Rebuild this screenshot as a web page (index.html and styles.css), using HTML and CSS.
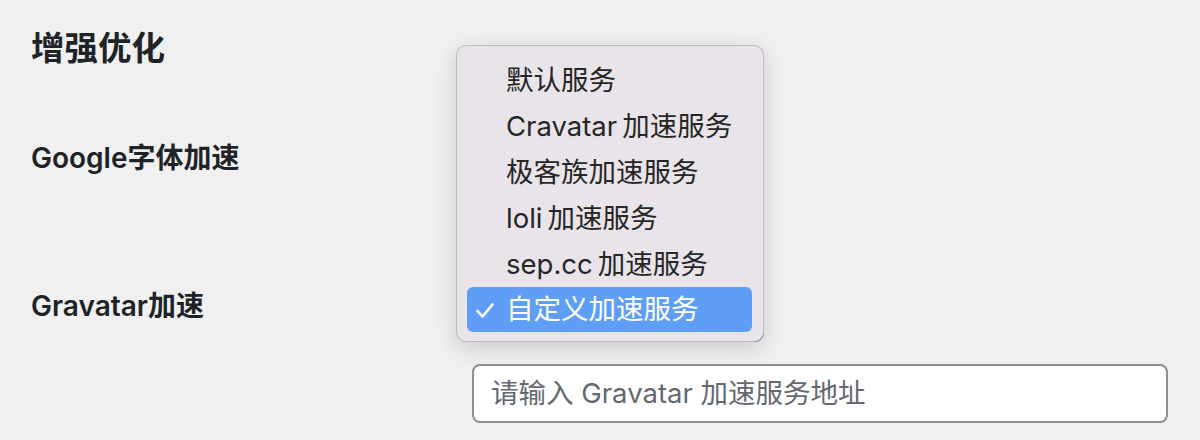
FILE: index.html
```html
<!DOCTYPE html>
<html lang="zh-CN">
<head>
<meta charset="utf-8">
<link rel="stylesheet" href="styles.css">
</head>
<body>
<div class="wrap">
  <h2 class="title">增强优化</h2>
  <div class="table">
    <div class="row row-one">
      <div class="th">Google字体加速</div>
      <div class="td"><div class="select"></div></div>
    </div>
    <div class="row row-two">
      <div class="th">Gravatar加速</div>
      <div class="td">
        <div class="select focus"></div>
        <div class="input">请输入 Gravatar 加速服务地址</div>
      </div>
    </div>
  </div>
  <div class="menu">
    <div class="item">默认服务</div>
    <div class="item">Cravatar&#8201;加速服务</div>
    <div class="item">极客族加速服务</div>
    <div class="item">loli&#8201;加速服务</div>
    <div class="item">sep.cc&#8201;加速服务</div>
    <div class="item selected">
      <svg class="check" width="18" height="15" viewBox="0 0 18 15"><path d="M1.5 8 L6.5 13.5 L16.5 1.5" fill="none" stroke="#fff" stroke-width="2.6" stroke-linecap="round" stroke-linejoin="round"/></svg>
      自定义加速服务
    </div>
  </div>
</div>
</body>
</html>
```

FILE: styles.css
```css
html, body {
  margin: 0;
  padding: 0;
  background: #f0f0f1;
}
body {
  font-family: "Inter", "Noto Sans CJK SC", sans-serif;
  color: #1d2327;
  width: 1200px;
  height: 440px;
  overflow: hidden;
}
.wrap {
  position: relative;
  padding: 26px 0 0 31px;
}
.title {
  margin: 0;
  font-size: 33.5px;
  line-height: 44px;
  font-weight: 700;
}
.table {
  margin-top: 40px;
}
.row {
  display: grid;
  grid-template-columns: 441px 696px;
}
.th {
  font-size: 28px;
  line-height: 36px;
  font-weight: 600;
}
.row-one { height: 140px; }
.row-one .th { padding-top: 30px; }
.row-one .td { padding-top: 19px; }
.row-two .th { padding-top: 38px; }
.row-two .td { padding-top: 33px; }
.select {
  width: 289px;
  height: 56px;
  background: #fff;
  border: 1px solid #8c8f94;
  border-radius: 8px;
}
.select.focus {
  border-color: #2271b1;
  box-shadow: 0 0 0 1px #2271b1;
}
.input {
  margin-top: 23px;
  box-sizing: border-box;
  height: 59px;
  width: 696px;
  background: #fff;
  border: 2px solid #8c8f94;
  border-radius: 8px;
  padding-left: 17px;
  font-size: 27.5px;
  line-height: 55px;
  color: #646970;
}
.menu {
  position: absolute;
  left: 456px;
  top: 45px;
  width: 308px;
  height: 297px;
  box-sizing: border-box;
  padding: 11px 11px 0 10px;
  background: #e9e4e9;
  border: 1px solid rgba(0,0,0,0.18);
  border-radius: 10px;
  box-shadow: 0 6px 22px rgba(0,0,0,0.16);
}
.item {
  height: 46px;
  line-height: 46px;
  padding-left: 39px;
  font-size: 27.5px;
  color: #262626;
  position: relative;
  border-radius: 6px;
}
.item.selected {
  background: #5f9ef7;
  color: #fff;
  height: 45px;
  line-height: 45px;
}
.check {
  position: absolute;
  left: 9px;
  top: 16px;
}
```
